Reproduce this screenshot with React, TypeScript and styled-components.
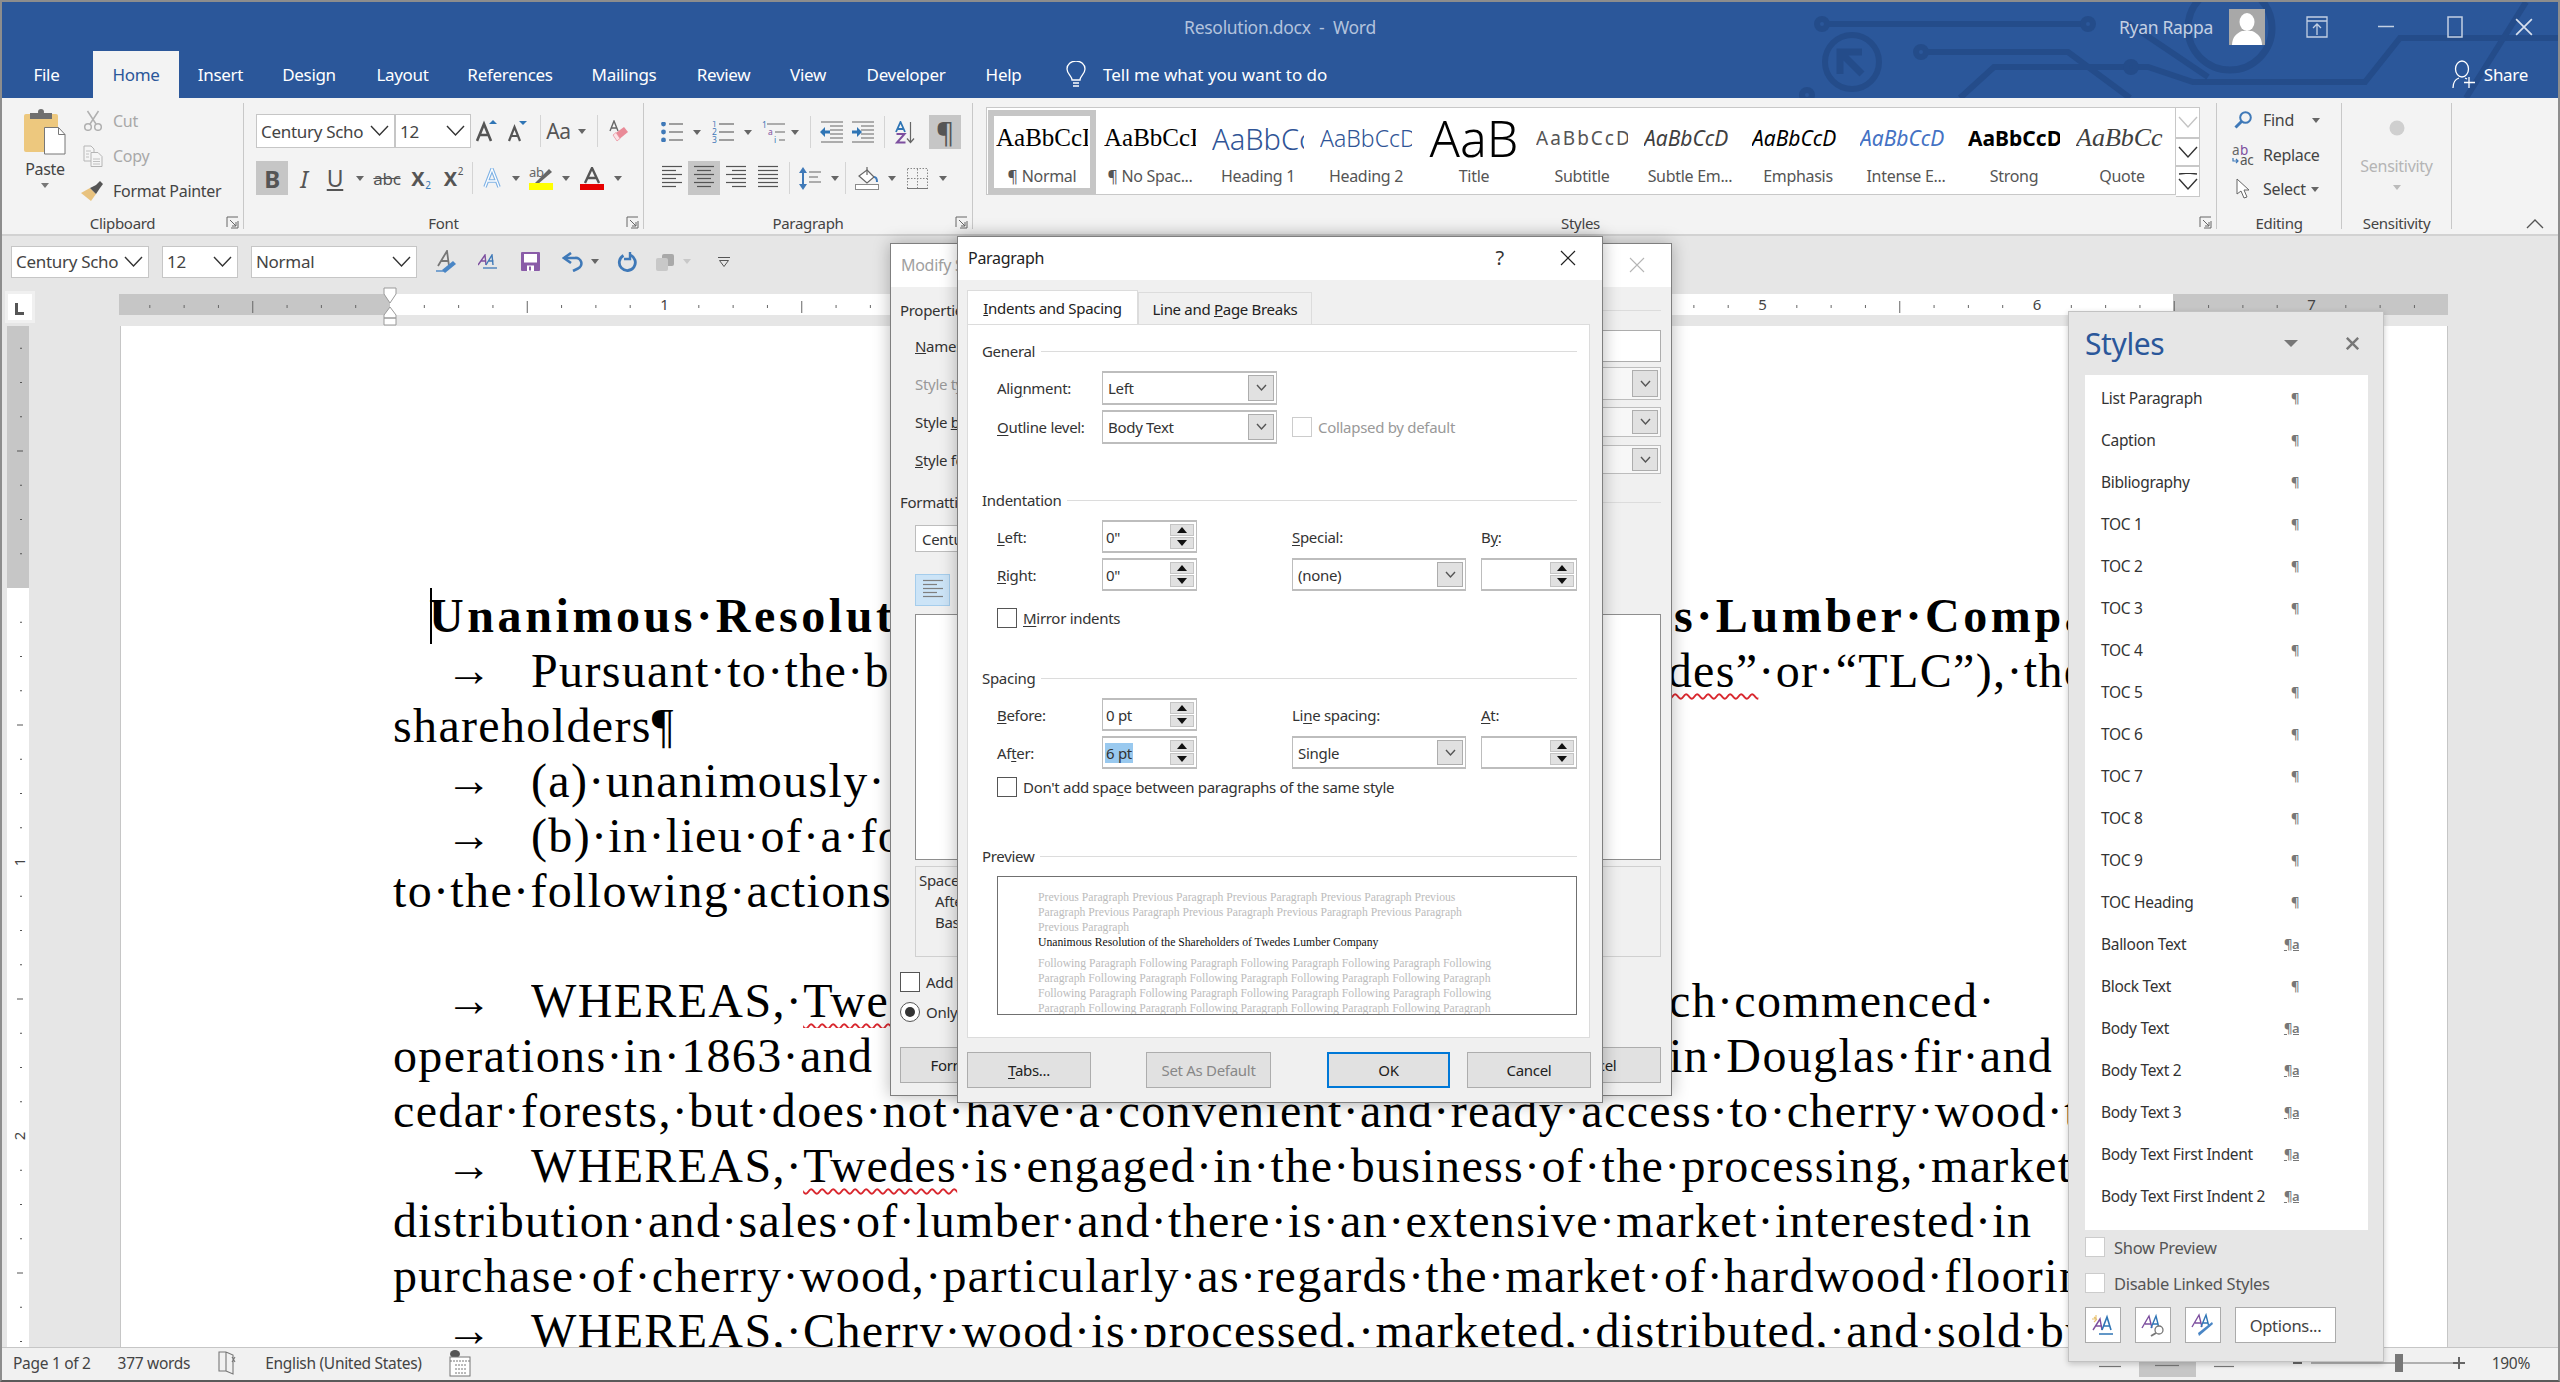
import React from "react";
import styled, { createGlobalStyle } from "styled-components";

const UI = `"Noto Sans", "Open Sans", sans-serif`;
const SERIF = `"Liberation Serif", serif`;

const Global = createGlobalStyle`
  html, body { margin: 0; padding: 0; background: #e6e6e6; overflow: hidden; }
  * { box-sizing: border-box; }
  svg { display: block; flex: none; }
`;

const Frame = styled.div`
  position: relative;
  width: 2560px;
  height: 1382px;
  display: flex;
  flex-direction: column;
  overflow: hidden;
  border-top: 2px solid #8d8d8d;
  border-left: 2px solid #8d8d8d;
  border-right: 2px solid #8d8d8d;
  border-bottom: 2px solid #5a5a5a;
  font-family: ${UI};
  font-size: 16px;
  letter-spacing: -0.3px;
  color: #333;
`;

/* header */
const Header = styled.div`
  position: relative;
  height: 96px;
  flex: none;
  background: #2b579a;
  color: #fff;
`;
const Circuit = styled.svg`
  position: absolute;
  left: 0;
  top: 0;
`;
const TitleRow = styled.div`
  position: relative;
  height: 49px;
  display: grid;
  grid-template-columns: 1fr auto 1fr;
  align-items: center;
`;
const DocTitle = styled.div`
  color: #b3c3dd;
  font-size: 17.5px;
  white-space: pre;
`;
const Account = styled.div`
  display: flex;
  align-items: center;
  justify-content: flex-end;
  height: 100%;
`;
const UserName = styled.span`
  color: #c3d0e3;
  font-size: 17.5px;
  margin-right: 16px;
`;
const Avatar = styled.div`
  width: 36px;
  height: 36px;
  background: #a8a8a8;
  margin-right: 17px;
`;
const WinBtn = styled.div`
  width: 69px;
  height: 100%;
  display: flex;
  align-items: center;
  justify-content: center;
`;
const TabRow = styled.div`
  position: relative;
  height: 47px;
  display: flex;
  align-items: stretch;
  padding-left: 12px;
`;
const Tab = styled.div<{ $w: number; $on?: boolean; $ml?: number }>`
  width: ${(p) => p.$w}px;
  margin-left: ${(p) => p.$ml ?? 0}px;
  display: flex;
  align-items: center;
  justify-content: center;
  font-size: 17px;
  color: ${(p) => (p.$on ? "#2b579a" : "#fff")};
  background: ${(p) => (p.$on ? "#f3f3f3" : "transparent")};
`;
const TellMe = styled.div`
  display: flex;
  align-items: center;
  gap: 17px;
  margin-left: 25px;
  font-size: 17px;
  letter-spacing: 0;
`;
const Share = styled.div`
  position: absolute;
  right: 30px;
  top: 0;
  height: 100%;
  display: flex;
  align-items: center;
  gap: 8px;
  font-size: 17px;
`;

/* ribbon */
const Ribbon = styled.div`
  height: 138px;
  flex: none;
  display: flex;
  align-items: flex-start;
  background: #f3f3f3;
  border-bottom: 2px solid #d2d2d2;
  padding-top: 5px;
`;
const Group = styled.div<{ $w: number; $last?: boolean }>`
  position: relative;
  width: ${(p) => p.$w}px;
  height: 126px;
  flex: none;
  border-right: ${(p) => (p.$last ? "none" : "1px solid #c8c8c8")};
`;
const GroupBody = styled.div<{ $pl?: number; $pt?: number }>`
  height: 110px;
  padding-left: ${(p) => p.$pl ?? 0}px;
  padding-top: ${(p) => p.$pt ?? 0}px;
`;
const GroupLabel = styled.div<{ $pr?: number }>`
  height: 20px;
  line-height: 20px;
  text-align: center;
  font-size: 15px;
  color: #444;
  padding-right: ${(p) => p.$pr ?? 0}px;
`;
const Launcher = styled.div`
  position: absolute;
  right: 4px;
  bottom: 0;
`;
const Row = styled.div<{ $mb?: number; $tall?: boolean }>`
  display: flex;
  align-items: ${(p) => (p.$tall ? "flex-start" : "center")};
  height: ${(p) => (p.$tall ? 106 : 34)}px;
  margin-bottom: ${(p) => p.$mb ?? 0}px;
`;
const Tool = styled.div<{ $w: number; $on?: boolean; $c?: string; $fs?: number; $strike?: boolean; $ml?: number }>`
  width: ${(p) => p.$w}px;
  height: 34px;
  flex: none;
  display: flex;
  align-items: center;
  justify-content: center;
  margin-left: ${(p) => p.$ml ?? 0}px;
  background: ${(p) => (p.$on ? "#c6c6c6" : "transparent")};
  color: ${(p) => p.$c ?? "#555"};
  font-size: ${(p) => p.$fs ?? 18}px;
  white-space: nowrap;
  text-decoration: ${(p) => (p.$strike ? "line-through" : "none")};
  sub, sup { font-size: 10px; color: #2f75b5; }
  sub { align-self: flex-end; margin-bottom: 3px; margin-left: 1px; }
  sup { align-self: flex-start; margin-top: 3px; margin-left: 1px; color: #555; }
`;
const VSep = styled.div<{ $ml?: number }>`
  width: 1px;
  height: 32px;
  flex: none;
  background: #d4d4d4;
  margin-left: ${(p) => p.$ml ?? 0}px;
`;
const Caret = styled.span<{ $c?: string; $ml?: number; $mt?: number }>`
  width: 0;
  height: 0;
  margin-left: ${(p) => p.$ml ?? 0}px;
  margin-top: ${(p) => p.$mt ?? 0}px;
  border-left: 4px solid transparent;
  border-right: 4px solid transparent;
  border-top: 5px solid ${(p) => p.$c ?? "#666"};
`;
const RibbonCombo = styled.div<{ $w: number; $h?: number; $ml?: number }>`
  width: ${(p) => p.$w}px;
  height: ${(p) => p.$h ?? 34}px;
  margin-left: ${(p) => p.$ml ?? 0}px;
  flex: none;
  display: flex;
  align-items: center;
  justify-content: space-between;
  padding: 0 5px 0 4px;
  background: #fff;
  border: 1px solid #c6c6c6;
  font-size: 17px;
  color: #444;
  overflow: hidden;
  white-space: nowrap;
`;
const PasteCol = styled.div`
  width: 79px;
  height: 106px;
  display: flex;
  flex-direction: column;
  align-items: center;
  padding: 6px 0 0 7px;
  font-size: 16px;
  color: #444;
  gap: 3px;
`;
const ClipRow = styled.div<{ $dim?: boolean }>`
  height: 35px;
  display: flex;
  align-items: center;
  gap: 8px;
  font-size: 16px;
  color: ${(p) => (p.$dim ? "#a8a8a8" : "#444")};
`;
const ClipIcon = styled.div`
  width: 24px;
  display: flex;
  justify-content: center;
`;
const Gallery = styled.div`
  display: flex;
  margin-left: 13px;
  width: 1214px;
`;
const GalleryList = styled.div`
  width: 1190px;
  height: 88px;
  display: flex;
  padding: 2px 0 0 1px;
  background: #fff;
  border: 1px solid #c8c8c8;
`;
const StyleCell = styled.div<{ $on?: boolean }>`
  width: 108px;
  height: 84px;
  flex: none;
  display: flex;
  flex-direction: column;
  align-items: center;
  border: 6px solid ${(p) => (p.$on ? "#c6c6c6" : "transparent")};
`;
const StyleSample = styled.div<{ $font: string; $size: number; $color?: string; $weight: number; $italic?: boolean; $spaced?: boolean; $center?: boolean }>`
  width: 92px;
  height: 49px;
  padding-bottom: 5px;
  overflow: hidden;
  display: flex;
  align-items: center;
  white-space: nowrap;
  color: ${(p) => p.$color ?? "#000"};
  font-family: ${(p) => p.$font};
  font-size: ${(p) => p.$size}px;
  font-weight: ${(p) => p.$weight};
  font-style: ${(p) => (p.$italic ? "italic" : "normal")};
  letter-spacing: ${(p) => (p.$spaced ? 2 : 0)}px;
  justify-content: ${(p) => (p.$center ? "center" : "flex-start")};
`;
const StyleName = styled.div`
  font-size: 16px;
  color: #555;
  line-height: 22px;
  white-space: nowrap;
`;
const ScrollCol = styled.div`
  width: 24px;
  display: flex;
  flex-direction: column;
`;
const ScrollBtn = styled.div<{ $h: number }>`
  height: ${(p) => p.$h}px;
  display: flex;
  flex-direction: column;
  align-items: center;
  justify-content: center;
  gap: 3px;
  background: #fff;
  border: 1px solid #c8c8c8;
  border-left: none;
`;
const EditRow = styled.div`
  height: 34.5px;
  display: flex;
  align-items: center;
  font-size: 16px;
  color: #444;
`;
const EditIcon = styled.div`
  width: 46px;
  display: flex;
  justify-content: center;
  padding-left: 6px;
`;
const SensBody = styled.div`
  height: 106px;
  display: flex;
  flex-direction: column;
  align-items: center;
  color: #b5b5b5;
  font-size: 16px;
  padding-top: 17px;
  gap: 19px;
`;
const SensCaret = styled(Caret)`
  margin-top: -11px;
`;
const Collapse = styled.div`
  position: absolute;
  right: 14px;
  bottom: 0;
`;

/* quick access */
const QuickBar = styled.div`
  height: 51px;
  flex: none;
  display: flex;
  align-items: center;
  padding: 0 0 0 9px;
  background: #e6e6e6;
`;
const QuickTool = styled.div<{ $w: number; $ml?: number }>`
  width: ${(p) => p.$w}px;
  margin-left: ${(p) => p.$ml ?? 0}px;
  flex: none;
  display: flex;
  align-items: center;
  justify-content: center;
`;
const RulerRow = styled.div`
  height: 39px;
  flex: none;
  display: flex;
  background: #e6e6e6;
`;
const TabSelector = styled.div`
  width: 30px;
  height: 32px;
  margin: 4px 0 0 3px;
  padding: 3px;
  background: #f0f0f0;
`;
const TabSelectorFace = styled.div`
  height: 26px;
  background: #fff;
  display: flex;
  align-items: flex-end;
  padding: 0 0 4px 6px;
`;
const HRuler = styled.svg`
  margin-left: 84px;
`;
const RulerText = styled.text`
  font-family: ${UI};
  font-size: 15px;
  fill: #444;
`;

/* workspace */
const Workspace = styled.div`
  flex: 1;
  display: flex;
  min-height: 0;
  background: #e6e6e6;
`;
const VRuler = styled.svg`
  margin-left: 5px;
`;
const Page = styled.div`
  width: 2328px;
  margin-left: 91px;
  height: 100%;
  overflow: hidden;
  background: #fff;
  border-left: 1px solid #c6c6c6;
  border-right: 1px solid #c6c6c6;
  padding: 262px 0 0 272px;
`;
const TextBlock = styled.div`
  width: 1675px;
  overflow: hidden;
  font-family: ${SERIF};
  font-size: 48px;
  line-height: 55px;
  letter-spacing: 1.35px;
  color: #000;
  white-space: nowrap;
`;
const Line = styled.div<{ $indent?: number; $bold?: boolean }>`
  height: 55px;
  display: flex;
  padding-left: ${(p) => p.$indent ?? 0}px;
  font-weight: ${(p) => (p.$bold ? 700 : 400)};
  letter-spacing: ${(p) => (p.$bold ? "3.6px" : "inherit")};
`;
const Arrow = styled.span`
  width: 85px;
  margin-left: 53px;
  flex: none;
  font-size: 46px;
  letter-spacing: 0;
`;
const Gone = styled.span<{ $w: number }>`
  width: ${(p) => p.$w}px;
  flex: none;
  overflow: hidden;
`;
const Typo = styled.span`
  text-decoration: underline wavy #d9272e 1.5px;
  text-underline-offset: 6px;
  text-decoration-skip-ink: none;
`;
const CaretMark = styled.span`
  width: 1.5px;
  height: 56px;
  background: #000;
  position: absolute;
  left: 428px;
  top: 586px;
`;

/* status bar */
const StatusBar = styled.div`
  height: 33px;
  flex: none;
  display: flex;
  align-items: center;
  padding: 0 0 3px 11px;
  background: #f1f1f1;
  border-top: 1px solid #c6c6c6;
  font-size: 15.5px;
  color: #444;
`;
const StatusText = styled.span<{ $ml?: number }>`
  margin-left: ${(p) => p.$ml ?? 0}px;
`;
const StatusIcon = styled.div<{ $ml: number }>`
  margin-left: ${(p) => p.$ml}px;
`;
const StatusRight = styled.div`
  margin-left: auto;
  height: 100%;
  display: flex;
  align-items: center;
  padding-right: 28px;
`;
const ViewBtn = styled.div<{ $on?: boolean }>`
  width: 57px;
  height: 100%;
  display: flex;
  align-items: center;
  justify-content: center;
  background: ${(p) => (p.$on ? "#c6c6c6" : "transparent")};
`;
const Zoom = styled.div`
  width: 176px;
  margin: 0 23px 0 40px;
  flex: none;
`;

/* dialogs */
const DialogBox = styled.div<{ $x: number; $y: number; $w: number; $h: number }>`
  position: absolute;
  left: ${(p) => p.$x}px;
  top: ${(p) => p.$y}px;
  width: ${(p) => p.$w}px;
  height: ${(p) => p.$h}px;
  background: #f0f0f0;
  border: 1px solid #7f7f7f;
  box-shadow: 0 0 16px rgba(0, 0, 0, 0.28);
  color: #333;
  font-size: 15px;
`;
const DlgTitle = styled.div<{ $h: number; $dim?: boolean }>`
  height: ${(p) => p.$h}px;
  background: #fff;
  display: flex;
  align-items: center;
  padding: 0 26px 2px 10px;
  font-size: 16px;
  color: ${(p) => (p.$dim ? "#a0a0a0" : "#222")};
`;
const DlgTitleSpacer = styled.div`
  flex: 1;
`;
const HelpMark = styled.span`
  margin-right: 56px;
  font-size: 20px;
  color: #333;
`;
const TabStrip = styled.div`
  display: flex;
  align-items: flex-end;
  height: 44px;
  padding-left: 9px;
`;
const DlgTab = styled.div<{ $w: number; $on?: boolean }>`
  width: ${(p) => p.$w}px;
  height: ${(p) => (p.$on ? 34 : 32)}px;
  display: flex;
  align-items: center;
  justify-content: center;
  background: ${(p) => (p.$on ? "#fff" : "#f0f0f0")};
  border: 1px solid #dcdcdc;
  border-bottom: none;
  color: #222;
`;
const Panel = styled.div`
  width: 623px;
  height: 714px;
  margin-left: 9px;
  padding: 16px 12px 0 14px;
  background: #fff;
  border: 1px solid #dcdcdc;
`;
const SectionHead = styled.div<{ $mt?: number; $mb?: number }>`
  height: 20px;
  display: flex;
  align-items: center;
  gap: 6px;
  margin-top: ${(p) => p.$mt ?? 0}px;
  margin-bottom: ${(p) => p.$mb ?? 10}px;
  color: #333;
`;
const SectionRule = styled.div`
  flex: 1;
  height: 1px;
  background: #dcdcdc;
`;
const FieldGrid = styled.div<{ $cols: string; $gap?: number }>`
  display: grid;
  grid-template-columns: ${(p) => p.$cols};
  row-gap: ${(p) => p.$gap ?? 5}px;
  align-items: center;
  margin-left: 15px;
`;
const FieldLabel = styled.div<{ $col?: number; $dim?: boolean }>`
  grid-column: ${(p) => p.$col ?? "auto"};
  color: ${(p) => (p.$dim ? "#999" : "#333")};
  white-space: nowrap;
  u { text-underline-offset: 2px; }
`;
const Combo = styled.div<{ $col?: number; $h?: number }>`
  grid-column: ${(p) => p.$col ?? "auto"};
  height: ${(p) => p.$h ?? 34}px;
  display: flex;
  align-items: center;
  justify-content: space-between;
  padding: 2px 2px 2px 5px;
  background: #fff;
  border: 1px solid #bdbdbd;
  border-width: 2px 1px;
`;
const ComboBtn = styled.div`
  width: 26px;
  height: 100%;
  display: flex;
  align-items: center;
  justify-content: center;
  background: #e1e1e1;
  border: 1px solid #adadad;
`;
const Spin = styled.div<{ $col?: number }>`
  grid-column: ${(p) => p.$col ?? "auto"};
  height: 33px;
  display: flex;
  align-items: center;
  justify-content: space-between;
  padding: 2px;
  background: #fff;
  border: 1px solid #bdbdbd;
  border-width: 2px 1px;
`;
const SpinValue = styled.span<{ $sel?: boolean }>`
  padding: 0 1px;
  background: ${(p) => (p.$sel ? "#99c9ef" : "transparent")};
`;
const SpinBtns = styled.div`
  width: 24px;
  height: 100%;
  display: flex;
  flex-direction: column;
  gap: 1px;
`;
const SpinBtn = styled.div<{ $down?: boolean }>`
  flex: 1;
  background: #e1e1e1;
  border: 1px solid #c4c4c4;
  display: flex;
  align-items: center;
  justify-content: center;
  &::after {
    content: "";
    border-left: 5px solid transparent;
    border-right: 5px solid transparent;
    ${(p) => (p.$down ? "border-top: 6px solid #111;" : "border-bottom: 6px solid #111;")}
  }
`;
const CheckRow = styled.div<{ $mt?: number; $ml?: number; $dim?: boolean }>`
  display: flex;
  align-items: center;
  gap: 6px;
  margin-top: ${(p) => p.$mt ?? 0}px;
  margin-left: ${(p) => p.$ml ?? 0}px;
  color: ${(p) => (p.$dim ? "#999" : "#333")};
  white-space: nowrap;
  u { text-underline-offset: 2px; }
`;
const Check = styled.div<{ $dim?: boolean; $round?: boolean; $dot?: boolean }>`
  width: 20px;
  height: 20px;
  flex: none;
  background: #fff;
  border: 1px solid ${(p) => (p.$dim ? "#ccc" : "#555")};
  border-radius: ${(p) => (p.$round ? "50%" : "0")};
  display: flex;
  align-items: center;
  justify-content: center;
  &::after {
    content: "";
    display: ${(p) => (p.$dot ? "block" : "none")};
    width: 10px;
    height: 10px;
    border-radius: 50%;
    background: #333;
  }
`;
const PreviewBox = styled.div`
  width: 580px;
  height: 139px;
  margin-left: 15px;
  padding: 13px 0 0 40px;
  background: #fff;
  border: 1px solid #707070;
  overflow: hidden;
  font-family: ${SERIF};
  font-size: 11.7px;
  line-height: 15px;
  letter-spacing: 0;
  white-space: nowrap;
`;
const PreviewLine = styled.div<{ $dark?: boolean; $mt?: number }>`
  color: ${(p) => (p.$dark ? "#111" : "#bcbcbc")};
  margin-top: ${(p) => p.$mt ?? 0}px;
`;
const DlgButtons = styled.div`
  display: flex;
  padding: 14px 0 0 9px;
`;
const DlgButton = styled.div<{ $w: number; $ml?: number; $default?: boolean; $dim?: boolean; $pr?: number }>`
  width: ${(p) => p.$w}px;
  height: 36px;
  margin-left: ${(p) => p.$ml ?? 0}px;
  padding-right: ${(p) => p.$pr ?? 0}px;
  display: flex;
  align-items: center;
  justify-content: center;
  background: #e1e1e1;
  border: ${(p) => (p.$default ? "2px solid #0078d7" : "1px solid #adadad")};
  color: ${(p) => (p.$dim ? "#888" : "#222")};
  u { text-underline-offset: 2px; }
`;
const ModifyBody = styled.div`
  padding: 13px 10px 0 9px;
`;
const ModifyHead = styled.div<{ $mt?: number }>`
  display: flex;
  align-items: center;
  gap: 8px;
  height: 20px;
  margin-top: ${(p) => p.$mt ?? 0}px;
`;
const ModifyRow = styled.div<{ $h: number; $mt?: number }>`
  height: ${(p) => p.$h}px;
  margin-top: ${(p) => p.$mt ?? 0}px;
  padding-left: 15px;
  display: flex;
  align-items: center;
  justify-content: space-between;
  white-space: nowrap;
`;
const ModifyField = styled.div`
  width: 300px;
  height: 100%;
  display: flex;
  justify-content: flex-end;
  align-items: stretch;
  padding: 2px;
  background: #f7f7f7;
  border: 1px solid #bdbdbd;
`;
const ModifyInput = styled.div`
  width: 300px;
  height: 100%;
  background: #fff;
  border: 1px solid #adadad;
`;
const FormatInput = styled.div`
  width: 210px;
  height: 100%;
  padding-left: 6px;
  background: #fff;
  border: 1px solid #bdbdbd;
  line-height: 26px;
`;
const AlignBtn = styled.div`
  width: 35px;
  height: 32px;
  margin: 22px 0 8px 15px;
  display: flex;
  align-items: center;
  justify-content: center;
  background: #cce4f7;
  border: 1px solid #a5cdec;
`;
const PreviewArea = styled.div`
  height: 246px;
  margin-left: 15px;
  background: #fff;
  border: 1px solid #8e8e8e;
`;
const DescArea = styled.div`
  height: 91px;
  margin: 6px 0 0 15px;
  padding: 3px 0 0 3px;
  background: #f0f0f0;
  border: 1px solid #d0d0d0;
  line-height: 21px;
`;
const DescLine = styled.div`
  padding-left: 16px;
`;
const ModifyButtons = styled.div`
  display: flex;
  justify-content: space-between;
  margin-top: 25px;
`;

/* styles pane */
const Pane = styled.div`
  position: absolute;
  left: 2066px;
  top: 309px;
  width: 316px;
  height: 1051px;
  padding: 0 16px;
  background: #e6e6e6;
  border: 1px solid #c2c2c2;
  box-shadow: 0 2px 6px rgba(0, 0, 0, 0.2);
`;
const PaneHead = styled.div`
  height: 63px;
  padding-right: 8px;
  display: flex;
  align-items: center;
  color: #2b579a;
  font-size: 30px;
  letter-spacing: -0.4px;
`;
const PaneCaret = styled.span`
  margin-left: auto;
  margin-right: 48px;
  width: 0;
  height: 0;
  border-left: 7px solid transparent;
  border-right: 7px solid transparent;
  border-top: 7px solid #777;
`;
const PaneList = styled.div`
  width: 283px;
  height: 855px;
  padding-top: 2px;
  background: #fff;
`;
const PaneItem = styled.div`
  height: 42px;
  display: flex;
  align-items: center;
  justify-content: space-between;
  padding: 0 69px 0 16px;
  font-size: 15.5px;
  color: #333;
`;
const PaneMark = styled.span<{ $linked?: boolean }>`
  font-size: 13px;
  font-weight: 600;
  color: #777;
  letter-spacing: -0.5px;
  text-decoration: ${(p) => (p.$linked ? "underline" : "none")};
`;
const PaneCheck = styled.div<{ $mt: number }>`
  height: 20px;
  display: flex;
  align-items: center;
  gap: 9px;
  margin-top: ${(p) => p.$mt}px;
  font-size: 16.5px;
  color: #555;
`;
const PaneButtons = styled.div`
  display: flex;
  gap: 14px;
  margin-top: 14px;
`;
const PaneBtn = styled.div<{ $w: number }>`
  width: ${(p) => p.$w}px;
  height: 36px;
  display: flex;
  align-items: center;
  justify-content: center;
  background: #fff;
  border: 1px solid #ababab;
  font-size: 16.5px;
  color: #444;
`;

/* icons */
const Chevron = ({ w = 18, h = 10, c = "#333" }: { w?: number; h?: number; c?: string }) => (
  <svg width={w} height={h + 2} viewBox={`0 0 ${w} ${h + 2}`}>
    <polyline points={`1,1 ${w / 2},${h} ${w - 1},1`} fill="none" stroke={c} strokeWidth="1.4" />
  </svg>
);
const LauncherIcon = () => (
  <svg width="13" height="13" viewBox="0 0 13 13">
    <path d="M1 11V1h11M5 12h7V5M4 4l6 6M10 6v4H6" fill="none" stroke="#666" strokeWidth="1" />
  </svg>
);
const Lines = ({ ws, w = 20, c = "#555", gap = 4 }: { ws: number[][]; w?: number; c?: string; gap?: number }) => (
  <svg width={w} height={ws.length * gap + 2} viewBox={`0 0 ${w} ${ws.length * gap + 2}`}>
    {ws.map(([a, b], i) => (
      <line key={i} x1={a} x2={b} y1={i * gap + 1.5} y2={i * gap + 1.5} stroke={c} strokeWidth="1.2" />
    ))}
  </svg>
);
const PasteIcon = () => (
  <svg width="42" height="46" viewBox="0 0 42 46">
    <rect x="0" y="5" width="34" height="38" rx="2" fill="#edc87e" />
    <rect x="6" y="4" width="22" height="6" fill="#6f6f6f" />
    <circle cx="17" cy="3" r="3" fill="#6f6f6f" />
    <path d="M20.500 18.500h14l6.500 7v19.500H20.500z" fill="#fff" stroke="#777" />
    <path d="M34.500 18.500v7H41" fill="none" stroke="#777" />
  </svg>
);
const CutIcon = () => (
  <svg width="20" height="21" viewBox="0 0 20 21">
    <g fill="none" stroke="#b0b0b0" strokeWidth="1.500">
      <circle cx="5" cy="17" r="3.300" />
      <circle cx="15" cy="17" r="3.300" />
      <path d="M7 14L15.500 1M13 14L4.500 1" />
    </g>
  </svg>
);
const CopyIcon = () => (
  <svg width="20" height="22" viewBox="0 0 20 22">
    <g fill="#f5f5f5" stroke="#b5b5b5">
      <path d="M1 1h7l3 3v12H1z" />
      <path d="M8 7.500h7l4 4v10H8z" />
    </g>
    <path d="M3 6h5M3 9h3M3 12h3M10 14h7M10 16.500h7M10 19h7" stroke="#c0c0c0" />
  </svg>
);
const PainterIcon = () => (
  <svg width="24" height="20" viewBox="0 0 24 20">
    <path d="M0 12L9 7l6 6-5 7z" fill="#e8c27e" />
    <path d="M9 7l6-3 4-4 3 3-3 4-4 6z" fill="#555" />
  </svg>
);
const GrowIcon = ({ down }: { down?: boolean }) => (
  <svg width="22" height="22" viewBox="0 0 22 22">
    {down ? (
      <>
        <path d="M2 21L7.500 7 13 21M4.500 16h6" fill="none" stroke="#555" strokeWidth="2.200" />
        <path d="M12 1h8l-4 4z" fill="#2f75b5" />
      </>
    ) : (
      <>
        <path d="M1 21L8 4l7 17M4 15h8" fill="none" stroke="#555" strokeWidth="2.600" />
        <path d="M13 4h8l-4-4z" fill="#2f75b5" />
      </>
    )}
  </svg>
);
const EraserIcon = () => (
  <svg width="20" height="22" viewBox="0 0 20 22">
    <path d="M1 11L5 1l4 10M2.500 8h5" fill="none" stroke="#666" strokeWidth="1.400" />
    <path d="M4 15l11-8 4 5-11 9z" fill="#e98a97" />
    <path d="M4 15l4 6 3-2.500-4-6z" fill="#fbe3e6" stroke="#e98a97" strokeWidth="0.600" />
  </svg>
);
const TextEffect = () => (
  <svg width="18" height="20" viewBox="0 0 18 20">
    <path d="M2 19L9 1l7 18M5 13h8" fill="none" stroke="#7fb2e5" strokeWidth="3.500" />
    <path d="M2 19L9 1l7 18M5 13h8" fill="none" stroke="#fff" strokeWidth="1.300" />
  </svg>
);
const Highlighter = () => (
  <svg width="24" height="23" viewBox="0 0 24 23">
    <text x="0" y="10" fontFamily={UI} fontSize="13" fill="#666">ab</text>
    <path d="M6 16L20 2l3 3L9 17z" fill="#666" />
    <rect x="0" y="16" width="24" height="7" fill="#ffff00" />
  </svg>
);
const FontColor = () => (
  <svg width="24" height="23" viewBox="0 0 24 23">
    <path d="M5 16L12 1l7 15M8 11h8" fill="none" stroke="#555" strokeWidth="2.400" />
    <rect x="0" y="17" width="24" height="6" fill="#e60000" />
  </svg>
);
const Bullets = () => (
  <svg width="23" height="20" viewBox="0 0 23 20">
    {[2.5, 10.5, 18.5].map((y) => (
      <g key={y}>
        <circle cx="2.500" cy={y - 0.500} r="2.400" fill="#3f79b8" />
        <line x1="8" x2="22" y1={y - 0.500} y2={y - 0.500} stroke="#666" strokeWidth="1.200" />
      </g>
    ))}
  </svg>
);
const Numbering = () => (
  <svg width="22" height="22" viewBox="0 0 22 22">
    {[3, 11, 19].map((y, i) => (
      <g key={y}>
        <text x="0" y={y + 3} fontFamily={UI} fontSize="8.500" fill="#3f79b8">{i + 1}</text>
        <line x1="7" x2="22" y1={y} y2={y} stroke="#666" strokeWidth="1.200" />
      </g>
    ))}
  </svg>
);
const Multilevel = () => (
  <svg width="23" height="22" viewBox="0 0 23 22">
    <text x="0" y="7" fontFamily={UI} fontSize="8.500" fill="#3f79b8">1</text>
    <text x="6" y="14" fontFamily={UI} fontSize="8.500" fill="#7d4f9f">a</text>
    <text x="12" y="22" fontFamily={UI} fontSize="8.500" fill="#3f79b8">i</text>
    <path d="M5 3h18M13 11h10M17 19h6" stroke="#666" strokeWidth="1.200" />
  </svg>
);
const IndentIcon = ({ inc }: { inc?: boolean }) => (
  <svg width="23" height="22" viewBox="0 0 23 22">
    <path d="M1 1h22M10 5h13M10 9h13M10 13h13M10 17h13M1 21h22" stroke="#666" strokeWidth="1.200" />
    {inc ? (
      <path d="M1 9.500h5V6l5 5-5 5v-3.500H1z" fill="#2f75b5" />
    ) : (
      <path d="M10 9.500H5V6l-5 5 5 5v-3.500h5z" fill="#2f75b5" />
    )}
  </svg>
);
const SortIcon = () => (
  <svg width="20" height="23" viewBox="0 0 20 23">
    <path d="M1 11L5.500 1 10 11M3 8h5" fill="none" stroke="#2f75b5" strokeWidth="1.800" />
    <path d="M1.500 13h8L2 21.500h8.500" fill="none" stroke="#7d4f9f" strokeWidth="2" />
    <path d="M15.500 1v20M12 17.500l3.500 4 3.500-4" fill="none" stroke="#666" strokeWidth="1.200" />
  </svg>
);
const LineSpacing = () => (
  <svg width="22" height="23" viewBox="0 0 22 23">
    <path d="M4 3v17" stroke="#3f79b8" strokeWidth="2" />
    <path d="M4 0l4 6H0zM4 23l4-6H0z" fill="#3f79b8" />
    <path d="M10 5h12M10 10h9M10 15h12" stroke="#666" strokeWidth="1.200" />
  </svg>
);
const Shading = () => (
  <svg width="24" height="24" viewBox="0 0 24 24">
    <path d="M12 4l7 7-7 6-8-7z" fill="#fff" stroke="#666" strokeWidth="1.200" />
    <path d="M12 1v8" stroke="#666" strokeWidth="1.200" />
    <path d="M19 11c2 0 3 2 3 5" fill="none" stroke="#3f79b8" strokeWidth="2" />
    <rect x="0.500" y="18.500" width="23" height="5" fill="#fff" stroke="#8a8a8a" />
  </svg>
);
const BordersIcon = () => (
  <svg width="21" height="21" viewBox="0 0 21 21">
    <rect x="0.500" y="0.500" width="20" height="20" fill="none" stroke="#888" strokeDasharray="1.500 1.500" />
    <path d="M10.500 1v20M1 10.500h20" stroke="#888" strokeDasharray="1.500 1.500" />
    <path d="M0 20.500h21" stroke="#777" />
  </svg>
);
const FindIcon = () => (
  <svg width="18" height="18" viewBox="0 0 18 18">
    <circle cx="11.500" cy="6.500" r="5.300" fill="none" stroke="#3f79b8" strokeWidth="2" />
    <path d="M7.500 10.500L1.500 16.500" stroke="#3f79b8" strokeWidth="3" />
  </svg>
);
const ReplaceIcon = () => (
  <svg width="23" height="20" viewBox="0 0 23 20">
    <text x="0" y="10" fontFamily={UI} fontSize="13.500" fill="#666">a</text>
    <text x="8" y="10" fontFamily={UI} fontSize="13.500" fill="#7d4f9f">b</text>
    <text x="8" y="20" fontFamily={UI} fontSize="13.500" fill="#555">ac</text>
    <path d="M1 13v3h5M4 14l2 2-2 2" fill="none" stroke="#3f79b8" strokeWidth="1.200" />
  </svg>
);
const SelectIcon = () => (
  <svg width="14" height="22" viewBox="0 0 14 22">
    <path d="M1 1v15l4-3 3 7 3-1-3-7h5z" fill="#fff" stroke="#666" />
  </svg>
);
const FormatA = () => (
  <svg width="21" height="23" viewBox="0 0 21 23">
    <path d="M2 16L11 1l2 15M5 11h8" fill="none" stroke="#777" strokeWidth="1.800" />
    <path d="M6 20l11-9 3 3-11 9z" fill="#4a86c5" />
    <path d="M0 21h8" stroke="#4a86c5" strokeWidth="1.400" />
  </svg>
);
const StyleA = () => (
  <svg width="19" height="15" viewBox="0 0 19 15">
    <path d="M0 11L7 1l1 10M3 7h5" fill="none" stroke="#7d4f9f" strokeWidth="1.400" />
    <path d="M8 11l6-10 1 10M10.500 7h5" fill="none" stroke="#3f79b8" strokeWidth="1.400" />
    <path d="M5 14h14" stroke="#3f79b8" strokeWidth="1.300" />
  </svg>
);
const SaveIcon = () => (
  <svg width="19" height="19" viewBox="0 0 19 19">
    <rect x="0" y="0" width="19" height="19" rx="1" fill="#8a5ca8" />
    <rect x="3" y="2" width="13" height="8.500" fill="#fff" />
    <rect x="6" y="13.500" width="7" height="5.500" fill="#fff" />
    <rect x="8" y="14.500" width="2" height="4" fill="#8a5ca8" />
  </svg>
);
const UndoIcon = () => (
  <svg width="22" height="20" viewBox="0 0 22 20">
    <path d="M3 6h10a5.500 5.500 0 0 1 3 10.500L11 19" fill="none" stroke="#3f79b8" strokeWidth="2.600" />
    <path d="M9 1L2 6l7 5" fill="none" stroke="#3f79b8" strokeWidth="2.600" />
  </svg>
);
const RedoIcon = () => (
  <svg width="20" height="20" viewBox="0 0 20 20">
    <path d="M6.500 3.500A8 8 0 1 0 13 3" fill="none" stroke="#3f79b8" strokeWidth="2.800" />
    <path d="M13 0v7H7" fill="none" stroke="#3f79b8" strokeWidth="2.400" />
  </svg>
);
const RepeatIcon = () => (
  <svg width="18" height="18" viewBox="0 0 18 18">
    <rect x="6" y="1" width="12" height="12" rx="2" fill="#a9a9a9" />
    <rect x="0" y="5" width="12" height="13" rx="2" fill="#c8c8c8" />
  </svg>
);
const Customize = () => (
  <svg width="12" height="10" viewBox="0 0 12 10">
    <path d="M0 .500h12M1.500 3.500L6 9.500l4.500-6z" fill="none" stroke="#555" strokeWidth="1" />
  </svg>
);
const LetterL = () => (
  <svg width="10" height="13" viewBox="0 0 10 13">
    <path d="M1 0h3v9h6v3H1z" fill="#555" />
  </svg>
);
const WinRestoreRibbon = () => (
  <svg width="22" height="22" viewBox="0 0 22 22">
    <path d="M1 1h20v20H1zM1 5h20M11 19v-10M7 12l4-4 4 4" fill="none" stroke="#c3d0e3" strokeWidth="1.300" />
  </svg>
);
const WinMin = () => (
  <svg width="16" height="3" viewBox="0 0 16 3">
    <path d="M0 1.500h16" stroke="#c3d0e3" strokeWidth="1.500" />
  </svg>
);
const WinMax = () => (
  <svg width="16" height="22" viewBox="0 0 16 22">
    <rect x="1" y="1" width="14" height="20" fill="none" stroke="#c3d0e3" strokeWidth="1.500" />
  </svg>
);
const WinClose = ({ s = 16, c = "#d7e0ee", w = 1.500 }: { s?: number; c?: string; w?: number }) => (
  <svg width={s} height={s} viewBox="0 0 16 16">
    <path d="M1 1l14 14M15 1L1 15" stroke={c} strokeWidth={w} />
  </svg>
);
const Bulb = () => (
  <svg width="20" height="28" viewBox="0 0 20 28">
    <path d="M6 19c0-4-5-6-5-11a9 8 0 0118 0c0 5-5 7-5 11z" fill="none" stroke="#fff" strokeWidth="1.300" />
    <path d="M7 22h6M7 25h6" stroke="#fff" strokeWidth="1.500" />
  </svg>
);
const ShareIcon = () => (
  <svg width="24" height="30" viewBox="0 0 24 30">
    <ellipse cx="10" cy="9" rx="6.500" ry="8" fill="none" stroke="#fff" strokeWidth="1.300" />
    <path d="M1 28c0-6 3-9 6-10M13 18l2 1M17 17v11M12 22.500h11" fill="none" stroke="#fff" strokeWidth="1.300" />
  </svg>
);
const Person = () => (
  <svg width="36" height="36" viewBox="0 0 36 36">
    <ellipse cx="18" cy="13" rx="7.500" ry="9" fill="#fff" />
    <path d="M3 36c0-8 5-12 10-14h10c5 2 10 6 10 14z" fill="#fff" />
  </svg>
);
const ReadingMark = () => (
  <svg width="20" height="26" viewBox="0 0 20 26">
    <path d="M1 2h7v19H1zM8 2l7 3v19l-7-3M17 7l-3 5M14 7l3 5" fill="none" stroke="#777" strokeWidth="1.100" />
  </svg>
);
const MacroIcon = () => (
  <svg width="22" height="28" viewBox="0 0 22 28">
    <ellipse cx="6" cy="5" rx="5" ry="4" fill="#555" />
    <rect x="1" y="8" width="20" height="19" fill="#fff" stroke="#777" />
    <path d="M1 12h20M6 16h11M6 20h11M6 24h11" stroke="#777" strokeDasharray="2 1" />
  </svg>
);
const PaneIconNew = () => (
  <svg width="24" height="24" viewBox="0 0 24 24">
    <path d="M3 4l2 2M1 6h5M3 9l3-3M5 2v4" stroke="#e8c272" strokeWidth="1.100" />
    <path d="M2 17L9 6l2 11M5 13h6" fill="none" stroke="#7d4f9f" strokeWidth="1.400" />
    <path d="M11 17L16 4l4 13M13 13h6M8 21h14" fill="none" stroke="#2f75b5" strokeWidth="1.600" />
  </svg>
);
const PaneIconInspect = () => (
  <svg width="24" height="24" viewBox="0 0 24 24">
    <path d="M1 15L8 3l3 12M4 11h6" fill="none" stroke="#7d4f9f" strokeWidth="1.400" />
    <path d="M10 15l5-12 3 12M12 11h5" fill="none" stroke="#2f75b5" strokeWidth="1.400" />
    <circle cx="18" cy="17" r="4" fill="#fff" stroke="#777" strokeWidth="1.300" />
    <path d="M15 20l-5 3" stroke="#777" strokeWidth="2" />
  </svg>
);
const PaneIconManage = () => (
  <svg width="24" height="24" viewBox="0 0 24 24">
    <path d="M1 14L8 2l3 12M4 10h6" fill="none" stroke="#7d4f9f" strokeWidth="1.400" />
    <path d="M10 14l5-12 3 12M12 10h5" fill="none" stroke="#2f75b5" strokeWidth="1.400" />
    <path d="M8 23l14-12-1-2L7 20z" fill="#4a86c5" />
  </svg>
);

const Circuitry = () => (
  <Circuit width="2556" height="96" viewBox="2 2 2556 96">
    <g fill="none" stroke="#244c8a" strokeWidth="6">
      <circle cx="1822" cy="24" r="5" />
      <path d="M1828 24H2082" />
      <circle cx="2088" cy="24" r="5" />
      <circle cx="1852" cy="62" r="27" />
      <path d="M1840 74V52h22M1842 54l20 20" strokeWidth="7" />
      <circle cx="1921" cy="52" r="5" />
      <path d="M1927 52h141l62 46" />
      <path d="M1960 98l34-31h137l17 0 45 15h172l35-44h160" />
      <circle cx="2131" cy="67" r="5" />
      <circle cx="1807" cy="95" r="5" />
      <circle cx="2230" cy="28" r="42" strokeWidth="7" />
      <path d="M2128 23l80 54M2466 98l60-96" />
    </g>
  </Circuit>
);

const HorizontalRuler = () => {
  const zero = 271;
  const inch = 274.5;
  const ticks: React.ReactNode[] = [];
  for (let n = -8; n <= 60; n++) {
    const x = zero + (n * inch) / 8;
    if (x < 2 || x > 2320) continue;
    if (n % 8 === 0) continue;
    const big = n % 4 === 0;
    ticks.push(
      <line key={n} x1={x} x2={x} y1={big ? 14 : 18} y2={big ? 26 : 21} stroke="#666" />
    );
  }
  return (
    <HRuler width="2329" height="39" viewBox="0 0 2329 39">
      <rect x="0" y="7" width="2329" height="21" fill="#fff" />
      <rect x="0" y="7" width="271" height="21" fill="#c6c6c6" />
      <rect x="2054" y="7" width="275" height="21" fill="#c6c6c6" />
      {ticks}
      {[-1, 1, 2, 3, 4, 5, 6, 7].map((n) => (
        <RulerText key={n} x={zero + n * inch} y="23" textAnchor="middle">
          {Math.abs(n)}
        </RulerText>
      ))}
      <path d="M265 1h12v6l-6 9-6-9zM271 20l6 8v3h-12v-3zM265 31h12v7h-12z" fill="#fff" stroke="#9a9a9a" />
    </HRuler>
  );
};

const VerticalRuler = () => {
  const top = 262;
  const inch = 274;
  const ticks: React.ReactNode[] = [];
  for (let n = -7; n <= 28; n++) {
    const y = top + (n * inch) / 8;
    if (n % 8 === 0) continue;
    const big = n % 4 === 0;
    ticks.push(
      <line key={n} x1={big ? 10 : 13} x2={big ? 16 : 15} y1={y} y2={y} stroke="#555" />
    );
  }
  return (
    <VRuler width="22" height="1021" viewBox="0 0 22 1021">
      <rect x="0" width="22" height="1021" fill="#fff" />
      <rect x="0" width="22" height="262" fill="#c6c6c6" />
      {ticks}
      {[1, 2, 3].map((n) => (
        <RulerText key={n} x="13" y={top + n * inch + 5} textAnchor="middle" transform={`rotate(-90 13 ${top + n * inch})`}>
          {n}
        </RulerText>
      ))}
    </VRuler>
  );
};

const tabs: [string, number, number?][] = [
  ["File", 65, 0], ["Home", 86, 14], ["Insert", 83], ["Design", 94], ["Layout", 93], ["References", 122],
  ["Mailings", 106], ["Review", 93], ["View", 76], ["Developer", 120], ["Help", 75],
];

const styleCells = [
  { label: "¶ Normal", sample: "AaBbCcI", font: SERIF, size: 25, on: true },
  { label: "¶ No Spac...", sample: "AaBbCcI", font: SERIF, size: 25 },
  { label: "Heading 1", sample: "AaBbCc", font: UI, size: 29, color: "#2f5496", thin: true },
  { label: "Heading 2", sample: "AaBbCcD", font: UI, size: 23, color: "#2f5496", thin: true },
  { label: "Title", sample: "AaB", font: UI, size: 50, thin: true, center: true },
  { label: "Subtitle", sample: "AaBbCcD", font: UI, size: 19, color: "#555", spaced: true },
  { label: "Subtle Em...", sample: "AaBbCcD", font: UI, size: 21, color: "#404040", italic: true },
  { label: "Emphasis", sample: "AaBbCcD", font: UI, size: 21, italic: true },
  { label: "Intense E...", sample: "AaBbCcD", font: UI, size: 21, color: "#4472c4", italic: true },
  { label: "Strong", sample: "AaBbCcD", font: UI, size: 21, bold: true },
  { label: "Quote", sample: "AaBbCc", font: SERIF, size: 26, color: "#404040", italic: true },
];

const paneItems: [string, boolean?][] = [
  ["List Paragraph"], ["Caption"], ["Bibliography"], ["TOC 1"], ["TOC 2"], ["TOC 3"], ["TOC 4"], ["TOC 5"],
  ["TOC 6"], ["TOC 7"], ["TOC 8"], ["TOC 9"], ["TOC Heading"], ["Balloon Text", true], ["Block Text"],
  ["Body Text", true], ["Body Text 2", true], ["Body Text 3", true], ["Body Text First Indent", true],
  ["Body Text First Indent 2", true],
];

const dots = (s: string) => s.replace(/ /g, "·");

const prevA = "Previous Paragraph Previous Paragraph Previous Paragraph Previous Paragraph Previous";
const prevB = "Paragraph Previous Paragraph Previous Paragraph Previous Paragraph Previous Paragraph";
const follA = "Following Paragraph Following Paragraph Following Paragraph Following Paragraph Following";
const follB = "Paragraph Following Paragraph Following Paragraph Following Paragraph Following Paragraph";

const TitleAndTabs = () => (
  <Header>
    <Circuitry />
    <TitleRow>
      <div />
      <DocTitle>Resolution.docx  -  Word</DocTitle>
      <Account>
        <UserName>Ryan Rappa</UserName>
        <Avatar><Person /></Avatar>
        <WinBtn><WinRestoreRibbon /></WinBtn>
        <WinBtn><WinMin /></WinBtn>
        <WinBtn><WinMax /></WinBtn>
        <WinBtn><WinClose s={18} /></WinBtn>
      </Account>
    </TitleRow>
    <TabRow>
      {tabs.map(([t, w, ml]) => (
        <Tab key={t} $w={w} $ml={ml} $on={t === "Home"}>{t}</Tab>
      ))}
      <TellMe><Bulb />Tell me what you want to do</TellMe>
      <Share><ShareIcon />Share</Share>
    </TabRow>
  </Header>
);

const RibbonBar = () => (
  <Ribbon>
    <Group $w={242}>
      <GroupBody>
        <Row $tall>
          <PasteCol>
            <PasteIcon />
            <span>Paste</span>
            <Caret $c="#777" />
          </PasteCol>
          <div>
            <ClipRow $dim><ClipIcon><CutIcon /></ClipIcon>Cut</ClipRow>
            <ClipRow $dim><ClipIcon><CopyIcon /></ClipIcon>Copy</ClipRow>
            <ClipRow><ClipIcon><PainterIcon /></ClipIcon>Format Painter</ClipRow>
          </div>
        </Row>
      </GroupBody>
      <GroupLabel>Clipboard</GroupLabel>
      <Launcher><LauncherIcon /></Launcher>
    </Group>

    <Group $w={400}>
      <GroupBody $pl={12} $pt={11}>
        <Row $mb={13}>
          <RibbonCombo $w={139}>Century Scho<Chevron w={19} /></RibbonCombo>
          <RibbonCombo $w={76}>12<Chevron w={19} /></RibbonCombo>
          <Tool $w={31}><GrowIcon /></Tool>
          <Tool $w={32}><GrowIcon down /></Tool>
          <VSep $ml={6} />
          <Tool $w={35} $fs={21}>Aa</Tool>
          <Tool $w={12}><Caret /></Tool>
          <VSep $ml={9} />
          <Tool $w={41}><EraserIcon /></Tool>
        </Row>
        <Row>
          <Tool $w={32} $on $fs={24}><b>B</b></Tool>
          <Tool $w={32} $fs={24}><i>I</i></Tool>
          <Tool $w={30} $fs={23}><u>U</u></Tool>
          <Tool $w={20}><Caret /></Tool>
          <Tool $w={34} $fs={17} $strike>abc</Tool>
          <Tool $w={34} $fs={20}><b>X</b><sub>2</sub></Tool>
          <Tool $w={31} $fs={20}><b>X</b><sup>2</sup></Tool>
          <VSep $ml={3} />
          <Tool $w={38}><TextEffect /></Tool>
          <Tool $w={10}><Caret /></Tool>
          <Tool $w={40}><Highlighter /></Tool>
          <Tool $w={10}><Caret /></Tool>
          <Tool $w={42}><FontColor /></Tool>
          <Tool $w={10}><Caret /></Tool>
        </Row>
      </GroupBody>
      <GroupLabel>Font</GroupLabel>
      <Launcher><LauncherIcon /></Launcher>
    </Group>

    <Group $w={329}>
      <GroupBody $pl={12} $pt={12}>
        <Row $mb={12}>
          <Tool $w={32}><Bullets /></Tool>
          <Tool $w={18}><Caret /></Tool>
          <Tool $w={34}><Numbering /></Tool>
          <Tool $w={16}><Caret /></Tool>
          <Tool $w={34}><Multilevel /></Tool>
          <Tool $w={10}><Caret /></Tool>
          <VSep $ml={10} />
          <Tool $w={40}><IndentIcon /></Tool>
          <Tool $w={22}><IndentIcon inc /></Tool>
          <VSep $ml={11} />
          <Tool $w={40}><SortIcon /></Tool>
          <Tool $w={32} $ml={4} $on $fs={28} $c="#555">¶</Tool>
        </Row>
        <Row>
          <Tool $w={32}><Lines ws={[[0, 20], [0, 14], [0, 20], [0, 14], [0, 20], [0, 14]]} w={20} /></Tool>
          <Tool $w={32} $on><Lines ws={[[0, 20], [3, 17], [0, 20], [3, 17], [0, 20], [3, 17]]} w={20} /></Tool>
          <Tool $w={32}><Lines ws={[[0, 20], [6, 20], [0, 20], [6, 20], [0, 20], [6, 20]]} w={20} /></Tool>
          <Tool $w={32}><Lines ws={[[0, 20], [0, 20], [0, 20], [0, 20], [0, 20], [0, 20]]} w={20} /></Tool>
          <VSep $ml={5} />
          <Tool $w={40}><LineSpacing /></Tool>
          <Tool $w={10}><Caret /></Tool>
          <VSep $ml={5} />
          <Tool $w={42}><Shading /></Tool>
          <Tool $w={8}><Caret /></Tool>
          <Tool $w={42}><BordersIcon /></Tool>
          <Tool $w={10}><Caret /></Tool>
        </Row>
      </GroupBody>
      <GroupLabel>Paragraph</GroupLabel>
      <Launcher><LauncherIcon /></Launcher>
    </Group>

    <Group $w={1244}>
      <GroupBody $pt={4}>
        <Gallery>
          <GalleryList>
            {styleCells.map((c) => (
              <StyleCell key={c.label} $on={c.on}>
                <StyleSample
                  $font={c.font}
                  $size={c.size}
                  $color={c.color}
                  $weight={c.bold ? 700 : c.thin ? 300 : 400}
                  $italic={c.italic}
                  $spaced={c.spaced}
                  $center={c.center}
                >
                  {c.sample}
                </StyleSample>
                <StyleName>{c.label}</StyleName>
              </StyleCell>
            ))}
          </GalleryList>
          <ScrollCol>
            <ScrollBtn $h={31}><Chevron w={20} h={11} c="#c4c4c4" /></ScrollBtn>
            <ScrollBtn $h={28}><Chevron w={20} h={11} /></ScrollBtn>
            <ScrollBtn $h={31}>
              <Chevron w={20} h={0} />
              <Chevron w={20} h={11} />
            </ScrollBtn>
          </ScrollCol>
        </Gallery>
      </GroupBody>
      <GroupLabel $pr={28}>Styles</GroupLabel>
      <Launcher><LauncherIcon /></Launcher>
    </Group>

    <Group $w={125}>
      <GroupBody>
        <EditRow><EditIcon><FindIcon /></EditIcon>Find<Caret $ml={18} /></EditRow>
        <EditRow><EditIcon><ReplaceIcon /></EditIcon>Replace</EditRow>
        <EditRow><EditIcon><SelectIcon /></EditIcon>Select<Caret $ml={5} /></EditRow>
      </GroupBody>
      <GroupLabel>Editing</GroupLabel>
    </Group>

    <Group $w={110}>
      <GroupBody>
        <SensBody>
          <svg width="16" height="16" viewBox="0 0 16 16">
            <circle cx="8" cy="8" r="7.500" fill="#cfcfcf" />
          </svg>
          <span>Sensitivity</span>
          <SensCaret $c="#bbb" />
        </SensBody>
      </GroupBody>
      <GroupLabel>Sensitivity</GroupLabel>
    </Group>

    <Group $w={106} $last>
      <Collapse>
        <svg width="18" height="10" viewBox="0 0 18 10">
          <path d="M1 9l8-8 8 8" fill="none" stroke="#555" strokeWidth="1.300" />
        </svg>
      </Collapse>
    </Group>
  </Ribbon>
);

const Quick = () => (
  <QuickBar>
    <RibbonCombo $w={138} $h={32}>Century Scho<Chevron w={19} /></RibbonCombo>
    <RibbonCombo $w={76} $h={32} $ml={13}>12<Chevron w={19} /></RibbonCombo>
    <RibbonCombo $w={166} $h={32} $ml={13}>Normal<Chevron w={19} /></RibbonCombo>
    <QuickTool $w={24} $ml={17}><FormatA /></QuickTool>
    <QuickTool $w={22} $ml={18}><StyleA /></QuickTool>
    <QuickTool $w={20} $ml={22}><SaveIcon /></QuickTool>
    <QuickTool $w={24} $ml={21}><UndoIcon /></QuickTool>
    <QuickTool $w={8} $ml={6}><Caret /></QuickTool>
    <QuickTool $w={22} $ml={17}><RedoIcon /></QuickTool>
    <QuickTool $w={20} $ml={17}><RepeatIcon /></QuickTool>
    <QuickTool $w={8} $ml={8}><Caret $c="#c8c8c8" /></QuickTool>
    <QuickTool $w={14} $ml={26}><Customize /></QuickTool>
  </QuickBar>
);

const Document = () => (
  <TextBlock>
    <Line $bold $indent={36}>
      <Gone $w={1220}>{dots("Unanimous Resolution")}</Gone>
      {dots("es Lumber Company")}
    </Line>
    <Line>
      <Arrow>→</Arrow>
      <Gone $w={1114}>{dots("Pursuant to the bylaws")}</Gone>
      <Typo>edes”</Typo>{dots(" or “TLC”), the")}
    </Line>
    <Line>{dots("shareholders")}¶</Line>
    <Line><Arrow>→</Arrow>{dots("(a) unanimously ")}</Line>
    <Line><Arrow>→</Arrow>{dots("(b) in lieu of a formal")}</Line>
    <Line>{dots("to the following actions:")}</Line>
    <Line />
    <Line>
      <Arrow>→</Arrow>
      <Gone $w={1138}>{dots("WHEREAS, ")}<Typo>Twedes</Typo></Gone>
      {dots("ch commenced ")}
    </Line>
    <Line>
      <Gone $w={1276}>{dots("operations in 1863 and")}</Gone>
      {dots("in Douglas fir and")}
    </Line>
    <Line>{dots("cedar forests, but does not have a convenient and ready access to cherry wood tr")}</Line>
    <Line>
      <Arrow>→</Arrow>
      {dots("WHEREAS, ")}<Typo>Twedes</Typo>{dots(" is engaged in the business of the processing, marketing")}
    </Line>
    <Line>{dots("distribution and sales of lumber and there is an extensive market interested in")}</Line>
    <Line>{dots("purchase of cherry wood, particularly as regards the market of hardwood flooring")}</Line>
    <Line>
      <Arrow>→</Arrow>
      {dots("WHEREAS, Cherry wood is processed, marketed, distributed, and sold by")}
    </Line>
  </TextBlock>
);

const Status = () => (
  <StatusBar>
    <StatusText>Page 1 of 2</StatusText>
    <StatusText $ml={27}>377 words</StatusText>
    <StatusIcon $ml={28}><ReadingMark /></StatusIcon>
    <StatusText $ml={27}>English (United States)</StatusText>
    <StatusIcon $ml={27}><MacroIcon /></StatusIcon>
    <StatusRight>
      <ViewBtn><Lines ws={[[0, 22], [0, 22], [0, 22]]} w={22} c="#777" gap={6} /></ViewBtn>
      <ViewBtn $on><Lines ws={[[0, 24], [0, 24], [0, 24]]} w={24} c="#777" gap={5} /></ViewBtn>
      <ViewBtn><Lines ws={[[0, 20], [0, 14], [0, 20]]} w={20} c="#777" gap={6} /></ViewBtn>
      <Zoom>
        <svg width="176" height="22" viewBox="0 0 176 22">
          <path d="M0 11h9" stroke="#666" strokeWidth="2" />
          <path d="M18 11h146" stroke="#b0b0b0" strokeWidth="2" />
          <rect x="102" y="2" width="8" height="18" fill="#777" />
          <path d="M160 11h12M166 5v12" stroke="#666" strokeWidth="2" />
        </svg>
      </Zoom>
      190%
    </StatusRight>
  </StatusBar>
);

const ModifyDialog = () => (
  <DialogBox $x={888} $y={241} $w={782} $h={853}>
    <DlgTitle $h={43} $dim>
      Modify Style
      <DlgTitleSpacer />
      <WinClose s={16} c="#b5b5b5" w={1.100} />
    </DlgTitle>
    <ModifyBody>
      <ModifyHead>Properties<SectionRule /></ModifyHead>
      <ModifyRow $h={32} $mt={10}><span><u>N</u>ame:</span><ModifyInput /></ModifyRow>
      <ModifyRow $h={33} $mt={5}>
        <FieldLabel $dim>Style type:</FieldLabel>
        <ModifyField><ComboBtn><Chevron w={11} h={6} c="#555" /></ComboBtn></ModifyField>
      </ModifyRow>
      <ModifyRow $h={30} $mt={7}>
        <span>Style <u>b</u>ased on:</span>
        <ModifyField><ComboBtn><Chevron w={11} h={6} c="#555" /></ComboBtn></ModifyField>
      </ModifyRow>
      <ModifyRow $h={29} $mt={8}>
        <span><u>S</u>tyle for following paragraph:</span>
        <ModifyField><ComboBtn><Chevron w={11} h={6} c="#555" /></ComboBtn></ModifyField>
      </ModifyRow>
      <ModifyHead $mt={18}>Formatting<SectionRule /></ModifyHead>
      <ModifyRow $h={27} $mt={13}><FormatInput>Century Schoolbook</FormatInput></ModifyRow>
      <AlignBtn><Lines ws={[[0, 20], [0, 14], [0, 20], [0, 14], [0, 20]]} w={20} c="#7f7f7f" /></AlignBtn>
      <PreviewArea />
      <DescArea>
        Space
        <DescLine>After: 6 pt</DescLine>
        <DescLine>Based on: Normal</DescLine>
      </DescArea>
      <CheckRow $mt={15}><Check /><span>Add to the Styles gallery</span></CheckRow>
      <CheckRow $mt={10}><Check $round $dot /><span>Only in this document</span></CheckRow>
      <ModifyButtons>
        <DlgButton $w={110}>Format</DlgButton>
        <DlgButton $w={110} $pr={24}>Cancel</DlgButton>
      </ModifyButtons>
    </ModifyBody>
  </DialogBox>
);

const ParagraphDialog = () => (
  <DialogBox $x={955} $y={234} $w={646} $h={867}>
    <DlgTitle $h={43}>
      Paragraph
      <DlgTitleSpacer />
      <HelpMark>?</HelpMark>
      <WinClose s={16} c="#222" w={1.200} />
    </DlgTitle>
    <TabStrip>
      <DlgTab $w={171} $on><span><u>I</u>ndents and Spacing</span></DlgTab>
      <DlgTab $w={174}><span>Line and <u>P</u>age Breaks</span></DlgTab>
    </TabStrip>
    <Panel>
      <SectionHead>General<SectionRule /></SectionHead>
      <FieldGrid $cols="105px 175px 15px auto">
        <FieldLabel>Ali<u>g</u>nment:</FieldLabel>
        <Combo>Left<ComboBtn><Chevron w={11} h={6} c="#555" /></ComboBtn></Combo>
        <div />
        <div />
        <FieldLabel><u>O</u>utline level:</FieldLabel>
        <Combo>Body Text<ComboBtn><Chevron w={11} h={6} c="#555" /></ComboBtn></Combo>
        <div />
        <CheckRow $dim><Check $dim />Collapsed by default</CheckRow>
      </FieldGrid>

      <SectionHead $mt={46}>Indentation<SectionRule /></SectionHead>
      <FieldGrid $cols="105px 95px 95px 174px 15px 96px">
        <FieldLabel><u>L</u>eft:</FieldLabel>
        <Spin><SpinValue>0"</SpinValue><SpinBtns><SpinBtn /><SpinBtn $down /></SpinBtns></Spin>
        <FieldLabel $col={4}><u>S</u>pecial:</FieldLabel>
        <FieldLabel $col={6}>B<u>y</u>:</FieldLabel>
        <FieldLabel><u>R</u>ight:</FieldLabel>
        <Spin><SpinValue>0"</SpinValue><SpinBtns><SpinBtn /><SpinBtn $down /></SpinBtns></Spin>
        <Combo $col={4} $h={33}>(none)<ComboBtn><Chevron w={11} h={6} c="#555" /></ComboBtn></Combo>
        <Spin $col={6}><SpinValue /><SpinBtns><SpinBtn /><SpinBtn $down /></SpinBtns></Spin>
      </FieldGrid>
      <CheckRow $mt={17} $ml={15}><Check /><span><u>M</u>irror indents</span></CheckRow>

      <SectionHead $mt={40}>Spacing<SectionRule /></SectionHead>
      <FieldGrid $cols="105px 95px 95px 174px 15px 96px">
        <FieldLabel><u>B</u>efore:</FieldLabel>
        <Spin><SpinValue>0 pt</SpinValue><SpinBtns><SpinBtn /><SpinBtn $down /></SpinBtns></Spin>
        <FieldLabel $col={4}>Li<u>n</u>e spacing:</FieldLabel>
        <FieldLabel $col={6}><u>A</u>t:</FieldLabel>
        <FieldLabel>Af<u>t</u>er:</FieldLabel>
        <Spin><SpinValue $sel>6 pt</SpinValue><SpinBtns><SpinBtn /><SpinBtn $down /></SpinBtns></Spin>
        <Combo $col={4} $h={33}>Single<ComboBtn><Chevron w={11} h={6} c="#555" /></ComboBtn></Combo>
        <Spin $col={6}><SpinValue /><SpinBtns><SpinBtn /><SpinBtn $down /></SpinBtns></Spin>
      </FieldGrid>
      <CheckRow $mt={8} $ml={15}><Check /><span>Don't add spa<u>c</u>e between paragraphs of the same style</span></CheckRow>

      <SectionHead $mt={49}>Preview<SectionRule /></SectionHead>
      <PreviewBox>
        <PreviewLine>{prevA}</PreviewLine>
        <PreviewLine>{prevB}</PreviewLine>
        <PreviewLine>Previous Paragraph</PreviewLine>
        <PreviewLine $dark>Unanimous Resolution of the Shareholders of Twedes Lumber Company</PreviewLine>
        <PreviewLine $mt={6}>{follA}</PreviewLine>
        <PreviewLine>{follB}</PreviewLine>
        <PreviewLine>{follA}</PreviewLine>
        <PreviewLine>{follB}</PreviewLine>
      </PreviewBox>
    </Panel>
    <DlgButtons>
      <DlgButton $w={124}><span><u>T</u>abs...</span></DlgButton>
      <DlgButton $w={125} $ml={55} $dim>Set As Default</DlgButton>
      <DlgButton $w={123} $ml={56} $default>OK</DlgButton>
      <DlgButton $w={124} $ml={17}>Cancel</DlgButton>
    </DlgButtons>
  </DialogBox>
);

const StylesPane = () => (
  <Pane>
    <PaneHead>
      Styles
      <PaneCaret />
      <WinClose s={13} c="#777" w={3} />
    </PaneHead>
    <PaneList>
      {paneItems.map(([name, linked]) => (
        <PaneItem key={name}>
          {name}
          <PaneMark $linked={linked}>{linked ? "¶a" : "¶"}</PaneMark>
        </PaneItem>
      ))}
    </PaneList>
    <PaneCheck $mt={7}><Check $dim />Show Preview</PaneCheck>
    <PaneCheck $mt={16}><Check $dim />Disable Linked Styles</PaneCheck>
    <PaneButtons>
      <PaneBtn $w={36}><PaneIconNew /></PaneBtn>
      <PaneBtn $w={36}><PaneIconInspect /></PaneBtn>
      <PaneBtn $w={36}><PaneIconManage /></PaneBtn>
      <PaneBtn $w={101}>Options...</PaneBtn>
    </PaneButtons>
  </Pane>
);

export default function App() {
  return (
    <>
      <Global />
      <Frame>
        <TitleAndTabs />
        <RibbonBar />
        <Quick />
        <RulerRow>
          <TabSelector><TabSelectorFace><LetterL /></TabSelectorFace></TabSelector>
          <HorizontalRuler />
        </RulerRow>
        <Workspace>
          <VerticalRuler />
          <Page>
            <Document />
          </Page>
        </Workspace>
        <Status />
        <CaretMark />
        <ModifyDialog />
        <ParagraphDialog />
        <StylesPane />
      </Frame>
    </>
  );
}
